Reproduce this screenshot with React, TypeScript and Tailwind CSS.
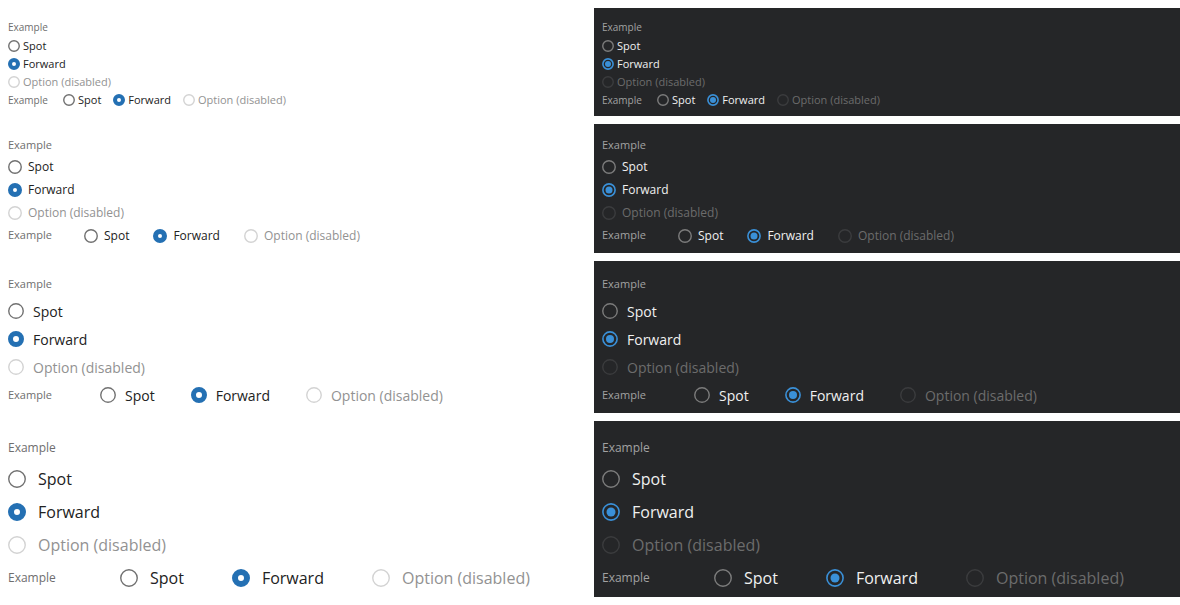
type Size = "S" | "M" | "L" | "XL";
type State = "off" | "on" | "disabled";

const sizes = {
  S: {
    panel: "h-[108px]",
    label: "h-[21px] pt-[4px] leading-[15px] text-[10px]",
    sideLabel: "w-[55px] text-[10px]",
    row: "h-[18px] gap-[3px] text-[11px]",
    hRow: "h-[18px] text-[11px]",
    hGap: "gap-3",
    circle: 12,
    ring: 4,
    dot: 3,
  },
  M: {
    panel: "h-[129px]",
    label: "h-[23px] pt-[4px] leading-[17px] text-[11px]",
    sideLabel: "w-[76px] text-[11px]",
    row: "h-[23px] gap-[6px] text-[12px]",
    hRow: "h-[23px] text-[12px]",
    hGap: "gap-6",
    circle: 14,
    ring: 5,
    dot: 3.5,
  },
  L: {
    panel: "h-[152px]",
    label: "h-[28px] pt-[7px] leading-[16px] text-[11px]",
    sideLabel: "w-[92px] text-[11px]",
    row: "h-[28px] gap-[9px] text-[14px]",
    hRow: "h-[28px] text-[14px]",
    hGap: "gap-9",
    circle: 16,
    ring: 5,
    dot: 4,
  },
  XL: {
    panel: "h-[176px]",
    label: "h-[33px] pt-[11px] leading-[16px] text-[12px]",
    sideLabel: "w-[112px] text-[12px]",
    row: "h-[33px] gap-[12px] text-[16px]",
    hRow: "h-[33px] text-[16px]",
    hGap: "gap-12",
    circle: 18,
    ring: 6,
    dot: 4.5,
  },
};

const options: { text: string; state: State }[] = [
  { text: "Spot", state: "off" },
  { text: "Forward", state: "on" },
  { text: "Option (disabled)", state: "disabled" },
];

function Circle({ size, state, dark }: { size: Size; state: State; dark: boolean }) {
  const s = sizes[size];
  const c = s.circle / 2;

  if (state === "on" && !dark) {
    const r = (s.circle - s.ring) / 2;
    return (
      <svg width={s.circle} height={s.circle} className="shrink-0">
        <circle cx={c} cy={c} r={r} fill="#fff" stroke="#2470b3" strokeWidth={s.ring} />
      </svg>
    );
  }
  if (state === "on" && dark) {
    return (
      <svg width={s.circle} height={s.circle} className="shrink-0">
        <circle cx={c} cy={c} r={c - 0.9} fill="none" stroke="#3a90d8" strokeWidth={1.6} />
        <circle cx={c} cy={c} r={s.dot} fill="#3a90d8" />
      </svg>
    );
  }
  const stroke =
    state === "disabled" ? (dark ? "#3b3c3e" : "#d3d3d3") : dark ? "#7c7c7c" : "#717171";
  return (
    <svg width={s.circle} height={s.circle} className="shrink-0">
      <circle cx={c} cy={c} r={c - 0.75} fill="none" stroke={stroke} strokeWidth={1.4} />
    </svg>
  );
}

function textColor(state: State, dark: boolean) {
  if (state === "disabled") return dark ? "text-[#6c6c6c]" : "text-[#929292]";
  return dark ? "text-[#f0f0f0]" : "text-[#222222]";
}

function Panel({ size, dark }: { size: Size; dark: boolean }) {
  const s = sizes[size];
  const labelColor = dark ? "text-[#a2a2a2]" : "text-[#6e6e6e]";

  return (
    <div className={`${s.panel} px-2 pt-2 ${dark ? "bg-[#252628]" : "bg-white"}`}>
      <div className={`${s.label} ${labelColor}`}>Example</div>
      {options.map((o) => (
        <div key={o.text} className={`flex items-center ${s.row}`}>
          <Circle size={size} state={o.state} dark={dark} />
          <span className={textColor(o.state, dark)}>{o.text}</span>
        </div>
      ))}
      <div className={`flex items-center ${s.hRow}`}>
        <span className={`${s.sideLabel} shrink-0 ${labelColor}`}>Example</span>
        <div className={`flex items-center ${s.hGap}`}>
          {options.map((o) => (
            <div key={o.text} className={`flex items-center ${s.row}`}>
              <Circle size={size} state={o.state} dark={dark} />
              <span className={`whitespace-nowrap ${textColor(o.state, dark)}`}>{o.text}</span>
            </div>
          ))}
        </div>
      </div>
    </div>
  );
}

export default function App() {
  const list: Size[] = ["S", "M", "L", "XL"];
  return (
    <div className="w-[1180px] bg-white pt-2 font-['Open_Sans',sans-serif] grid grid-cols-2 gap-2">
      {list.map((size) => [
        <Panel key={size + "l"} size={size} dark={false} />,
        <Panel key={size + "d"} size={size} dark={true} />,
      ])}
    </div>
  );
}
